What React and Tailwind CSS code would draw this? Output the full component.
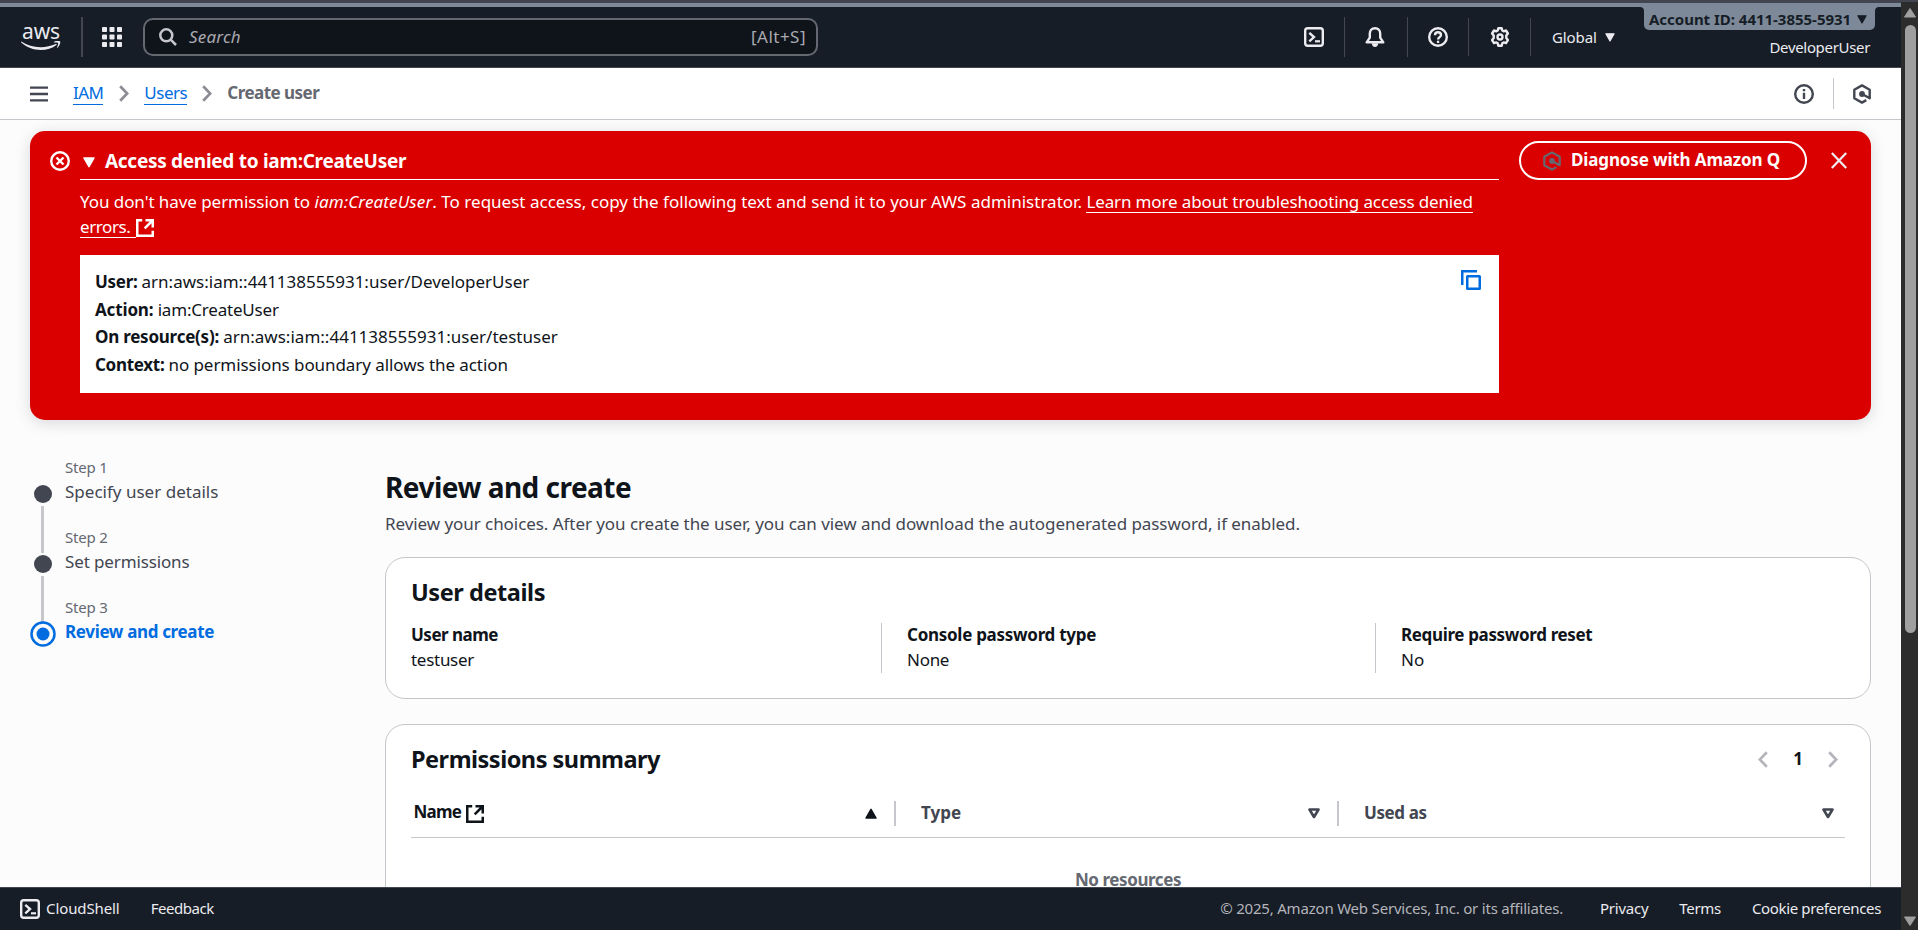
import React from 'react';

const AwsLogo = () => (
  <div className="flex w-10 flex-col items-center text-[#ebebf0]">
    <span className="h-[17px] font-['Noto_Sans',sans-serif] text-[21px] leading-[15px] tracking-[-0.1px]">aws</span>
    <svg width="40" height="10" viewBox="0 0 40 10" fill="currentColor">
      <path d="M.4.6C6 4.200 12.500 6.200 19.500 6.200c5.500 0 10.800-1.200 15.300-3.200.8-.4 1.300.5.600 1C31.300 7.200 25.500 9 19.800 9 12.400 9 5.700 6.300.3 1.500c-.5-.5-.4-1.200.1-.9z" />
      <path d="M33.200.7c2-1.200 5.500-1.200 6 0 .5 1.300-.9 4.700-2.700 6.100-.4.300-.7.100-.5-.3.700-1.600 1.500-3.900 1.100-4.500-.4-.6-2.500-.5-3.800-.4-.5 0-.6-.5-.1-.9z" />
    </svg>
  </div>
);

const GridIcon = () => (
  <svg width="20" height="20" viewBox="0 0 20 20" fill="#ebebf0">
    {[0, 7.5, 15].map((y) => [0, 7.5, 15].map((x) => <rect key={`${x}-${y}`} x={x} y={y} width="5" height="5" rx=".8" />))}
  </svg>
);

const SearchIcon = () => (
  <svg width="18" height="18" viewBox="0 0 18 18" fill="none" stroke="#c6c6cd" strokeWidth="2.500">
    <circle cx="7.300" cy="7.300" r="6" />
    <path d="M11.700 11.700 17 17" />
  </svg>
);

const ShellIcon = () => (
  <svg width="20" height="20" viewBox="0 0 20 20" fill="none" stroke="#ebebf0" strokeWidth="2.400">
    <rect x="1.200" y="1.200" width="17.600" height="17.600" rx="2.500" />
    <path d="m5.300 5.800 4.700 4.300-4.700 4.300" />
    <path d="M11 14.300h5" strokeWidth="2.200" />
  </svg>
);

const BellIcon = () => (
  <svg width="20" height="20" viewBox="0 0 20 20" fill="none" stroke="#ebebf0" strokeWidth="2.400" strokeLinejoin="round">
    <path d="M10 1.200c-3.300 0-5.200 2.300-5.200 5.400v4L1.700 15.300h16.600l-3.100-4.700v-4C15.200 3.500 13.300 1.200 10 1.200z" />
    <path d="M6.800 16.200h6.400c0 2.200-1.400 3.800-3.200 3.800s-3.200-1.600-3.200-3.800z" fill="#ebebf0" stroke="none" />
  </svg>
);

const HelpIcon = () => (
  <svg width="20" height="20" viewBox="0 0 20 20" fill="none" stroke="#ebebf0" strokeWidth="2.400">
    <circle cx="10" cy="10" r="8.800" />
    <path d="M7 8.200C7 6.300 8.300 5.200 10 5.200s3 1.100 3 2.700c0 2.200-2.900 2.200-2.900 4.600" />
    <path d="M8.900 13.700h2.300V16H8.900z" fill="#ebebf0" stroke="none" />
  </svg>
);

const GearIcon = () => (
  <svg width="20" height="20" viewBox="0 0 20 20" fill="none" stroke="#ebebf0" strokeWidth="2.400" strokeLinejoin="round">
    <circle cx="10" cy="10" r="2.500" />
    <path d="M8.300 1.200h3.400l.6 2.300 1.300.8 2.400-.8 1.900 3-1.600 2v2.600l1.600 2-1.900 3-2.400-.7-1.300.8-.6 2.500H8.300l-.6-2.500-1.300-.8-2.400.7-1.900-3 1.600-2V8.500l-1.600-2 1.900-3 2.400.8 1.300-.8z" />
  </svg>
);

const InfoIcon = () => (
  <svg width="20" height="20" viewBox="0 0 20 20" fill="none" stroke="#424650" strokeWidth="2.400">
    <circle cx="10" cy="10" r="8.800" />
    <path d="M10 5v2.200M10 8.800v6.200" />
  </svg>
);

const QIcon = ({ color, strokeWidth }) => (
  <svg width="18" height="20" viewBox="0 0 18 20" fill="none" stroke={color} strokeWidth={strokeWidth} strokeLinejoin="round">
    <path d="M13.300 16.100 9 18.600l-7.700-4.400V5.800L9 1.400l7.700 4.400v8.400L10 10.500" />
    <circle cx="9" cy="10" r="2.900" fill={color} stroke="none" />
  </svg>
);

const ExternalIcon = ({ className }) => (
  <svg className={className} width="18" height="18" viewBox="0 0 18 18" fill="none" stroke="currentColor" strokeWidth="2.500">
    <path d="M6.200 1.250H1.250v15.500h15.500v-5" />
    <path d="M9.500 1.250h7.250v7.250M16.500 1.500 8.700 9.300" />
  </svg>
);

const CopyIcon = () => (
  <svg width="20" height="20" viewBox="0 0 20 20" fill="none" stroke="#006ce0" strokeWidth="2.500">
    <path d="M1.250 15V1.250H16" />
    <rect x="6.250" y="6.250" width="12.500" height="12.500" rx=".3" />
  </svg>
);

const ErrorIcon = () => (
  <svg width="20" height="20" viewBox="0 0 20 20" fill="none" stroke="#ffffff" strokeWidth="2.400">
    <circle cx="10" cy="10" r="8.800" />
    <path d="m6.500 6.500 7 7m0-7-7 7" />
  </svg>
);

const Chevron = ({ color, className }) => (
  <svg className={className} width="10" height="17" viewBox="0 0 10 17" fill="none" stroke={color} strokeWidth="2.700">
    <path d="m1.200 1.200 7 7.300-7 7.300" />
  </svg>
);

const Triangle = ({ className, color }) => (
  <svg className={className} width="12" height="11" viewBox="0 0 12 11" fill={color} stroke={color} strokeWidth="1.500" strokeLinejoin="round">
    <path d="M1 1h10L6 9.700z" />
  </svg>
);

const SortIcon = () => (
  <svg width="12" height="11" viewBox="0 0 12 11" fill="none" stroke="#424650" strokeWidth="2.600" strokeLinejoin="round">
    <path d="M1.500 1.500h9L6 9z" />
  </svg>
);

function Header() {
  return (
    <header className="relative flex h-[61px] shrink-0 items-center border-b border-[#424650] bg-[#161d26] pr-[31px] pl-[21px] text-[15px] text-[#ebebf0]">
      <AwsLogo />
      <div className="ml-5 h-10 w-0.5 bg-[#424650]" />
      <div className="ml-[19px]"><GridIcon /></div>
      <div className="ml-[21px] flex h-[38px] w-[675px] items-center rounded-[10px] border-2 border-[#656871] bg-[#0f141a] pr-2.5 pl-3.5 text-[17px] text-[#a9a9b0]">
        <SearchIcon />
        <span className="ml-3 leading-6 tracking-[0.2px] italic">Search</span>
        <span className="ml-auto leading-6 tracking-[0.48px]">[Alt+S]</span>
      </div>
      <div className="ml-[486px] flex items-center">
        <ShellIcon />
        <div className="ml-5 h-10 w-px bg-[#424650]" />
        <div className="ml-5"><BellIcon /></div>
        <div className="ml-[22px] h-10 w-px bg-[#424650]" />
        <div className="ml-5"><HelpIcon /></div>
        <div className="ml-5 h-[38px] w-px bg-[#424650]" />
        <div className="ml-[21px]"><GearIcon /></div>
        <div className="ml-5 h-[38px] w-px bg-[#424650]" />
        <span className="ml-[21px] tracking-[-0.1px]">Global</span>
        <Triangle className="ml-2 h-[9px] w-[10px]" color="#ebebf0" />
      </div>
      <div className="mt-5 ml-auto leading-5 tracking-[-0.33px]">DeveloperUser</div>
      <div className="absolute top-0 right-[26px] flex h-[23px] w-[231px] items-center rounded-b-[5px] bg-[#7d8998] pb-0.5 pl-[5px] text-[15px] font-bold text-[#161d26]">
        <svg className="absolute top-0 -left-1" width="4" height="4" viewBox="0 0 4 4" fill="#7d8998"><path d="M0 0h4v4C4 1.500 2.500 0 0 0z" /></svg>
        <svg className="absolute top-0 -right-1" width="4" height="4" viewBox="0 0 4 4" fill="#7d8998"><path d="M4 0H0v4C0 1.500 1.500 0 4 0z" /></svg>
        <span className="mt-1 tracking-[-0.02px] whitespace-nowrap">Account ID: 4411-3855-5931</span>
        <Triangle className="mt-1 ml-1.5 h-[9px] w-[10px]" color="#161d26" />
      </div>
    </header>
  );
}

function Breadcrumbs() {
  return (
    <nav className="flex h-[52px] shrink-0 items-center border-b border-[#c6c6cd] bg-white pr-[30px] pl-[30px] text-[17px]">
      <svg width="18" height="16" viewBox="0 0 18 16" stroke="#424650" strokeWidth="2.400"><path d="M0 1.600h18M0 8h18M0 14.400h18" /></svg>
      <a className="ml-[25px] h-[22px] border-b border-[#006ce0] leading-5 tracking-[-0.6px] text-[#006ce0]">IAM</a>
      <Chevron className="ml-4" color="#8c8c94" />
      <a className="ml-[15px] h-[22px] border-b border-[#006ce0] leading-5 tracking-[-0.46px] text-[#006ce0]">Users</a>
      <Chevron className="ml-[15px]" color="#8c8c94" />
      <span className="ml-[15px] h-[22px] leading-5 font-bold tracking-[-0.53px] text-[#656871]">Create user</span>
      <div className="ml-auto flex items-center">
        <InfoIcon />
        <div className="mr-[19px] ml-[19px] h-[31px] w-px bg-[#c6c6cd]" />
        <QIcon color="#424650" strokeWidth="2.400" />
      </div>
    </nav>
  );
}

function Alert() {
  return (
    <section className="mx-[30px] mt-[11px] flex h-[289px] shrink-0 rounded-[15px] bg-[#db0000] pl-5 text-[17px] text-white shadow-[0_3px_16px_rgba(0,7,22,0.14)]">
      <div className="pt-5"><ErrorIcon /></div>
      <div className="ml-2.5 w-[1419px]">
        <div className="flex h-[49px] items-center border-b border-white pt-3 pl-[3px]">
          <Triangle color="#ffffff" className="mt-0.5" />
          <h3 className="ml-[10px] text-[19px] font-bold tracking-[-0.29px]">Access denied to iam:CreateUser</h3>
        </div>
        <div className="mt-[9px] whitespace-nowrap">
          <div className="flex h-[25px] leading-[25px] whitespace-pre">
            <span className="tracking-[-0.06px]">You don't have permission to </span>
            <span className="tracking-[0.13px] italic">iam:CreateUser</span>
            <span className="tracking-[0.01px]">. To request access, copy the following text and send it to your AWS administrator. </span>
            <a className="h-6 border-b border-white tracking-[-0.13px]">Learn more about troubleshooting access denied</a>
          </div>
          <div className="flex h-[25px] leading-[25px]">
            <a className="h-6 border-b border-white pr-[5px] tracking-[-0.4px]">errors.</a>
            <ExternalIcon className="mt-[5px]" />
          </div>
        </div>
        <div className="mt-4 flex h-[138px] justify-between bg-white pt-[13px] pr-[18px] pl-[15px] text-[#0f141a]">
          <div className="text-[17px] leading-[27.5px] whitespace-pre">
            <div><b className="tracking-[-0.3px]">User: </b><span>arn:aws:iam::441138555931:user/DeveloperUser</span></div>
            <div><b className="tracking-[-0.15px]">Action: </b><span className="tracking-[-0.2px]">iam:CreateUser</span></div>
            <div><b className="tracking-[-0.24px]">On resource(s): </b><span className="tracking-[0.01px]">arn:aws:iam::441138555931:user/testuser</span></div>
            <div><b className="tracking-[-0.3px]">Context: </b><span className="tracking-[-0.07px]">no permissions boundary allows the action</span></div>
          </div>
          <div className="pt-0.5"><CopyIcon /></div>
        </div>
      </div>
      <div className="mt-2.5 ml-5 flex h-[39px] w-72 items-center rounded-full border-2 border-white pl-[22px]">
        <QIcon color="#656871" strokeWidth="2.200" />
        <span className="-mt-px ml-2.5 text-[17px] font-bold tracking-[-0.14px] whitespace-nowrap">Diagnose with Amazon Q</span>
      </div>
      <svg className="mt-[21px] ml-6" width="16" height="17" viewBox="0 0 16 17" fill="none" stroke="#ebebf0" strokeWidth="2.300"><path d="m.8 1 14.400 15M15.200 1 .8 16" /></svg>
    </section>
  );
}

function Step({ label, title, last, titleClass }) {
  return (
    <li className="flex h-[70px]">
      <div className="flex w-[26px] flex-col items-center">
        {last ? (
          <svg className="mt-[26px]" width="26" height="26" viewBox="0 0 26 26"><circle cx="13" cy="13" r="11.500" fill="none" stroke="#006ce0" strokeWidth="2.500" /><circle cx="13" cy="13" r="6.500" fill="#006ce0" /></svg>
        ) : (
          <>
            <span className="mt-[30px] size-[18px] shrink-0 rounded-full bg-[#424650]" />
            <span className="mt-[3px] -mb-[28px] h-[47px] w-[3px] shrink-0 bg-[#c6c6cd]" />
          </>
        )}
      </div>
      <div className="ml-[9.5px]">
        <div className="h-6 text-[15px] leading-[25px] tracking-[-0.2px] text-[#656871]">{label}</div>
        <div className={titleClass}>{title}</div>
      </div>
    </li>
  );
}

function Steps() {
  return (
    <ol className="mt-[35px] ml-[29.5px] w-[355.5px] shrink-0">
      <Step label="Step 1" title="Specify user details" titleClass="text-[17px] leading-[25px] text-[#424650] tracking-[0.01px]" />
      <Step label="Step 2" title="Set permissions" titleClass="text-[17px] leading-[25px] text-[#424650] tracking-[-0.13px]" />
      <Step label="Step 3" title="Review and create" last titleClass="text-[17px] leading-[25px] font-bold text-[#006ce0] tracking-[-0.34px]" />
    </ol>
  );
}

function UserDetails() {
  return (
    <section className="mt-[21px] h-[142px] rounded-[20px] border border-[#c6c6cd] bg-white px-[25px] pt-[19px]">
      <h2 className="text-[23.5px] leading-[30px] font-bold tracking-[-0.43px]">User details</h2>
      <dl className="mt-[16px] flex h-[50px] text-[17px] leading-[25px]">
        <div className="w-[470px]"><dt className="-mt-px font-bold tracking-[-0.5px]">User name</dt><dd className="tracking-[-0.28px]">testuser</dd></div>
        <div className="w-[494px] border-l border-[#c6c6cd] pl-[25px]"><dt className="-mt-px font-bold tracking-[-0.28px]">Console password type</dt><dd className="tracking-[-0.28px]">None</dd></div>
        <div className="border-l border-[#c6c6cd] pl-[25px]"><dt className="-mt-px font-bold tracking-[-0.35px]">Require password reset</dt><dd>No</dd></div>
      </dl>
    </section>
  );
}

function PermissionsSummary() {
  return (
    <section className="mt-[25px] h-[240px] rounded-[20px] border border-[#c6c6cd] bg-white px-[25px] pt-[19px]">
      <div className="flex items-center">
        <h2 className="text-[23.5px] leading-[30px] font-bold tracking-[-0.5px]">Permissions summary</h2>
        <div className="mr-[7px] ml-auto flex items-center text-[17px] font-bold">
          <Chevron className="rotate-180" color="#b4b4bb" />
          <span className="mx-[25px] w-[10px] text-center leading-6">1</span>
          <Chevron color="#b4b4bb" />
        </div>
      </div>
      <div className="mt-[17px] flex h-[47px] items-center border-b border-[#c6c6cd] pb-px text-[17px] font-bold text-[#424650]">
        <div className="flex w-[483px] items-center pr-[17px] pl-[2.5px] text-[#0f141a]">
          <span className="-mt-1 tracking-[-0.75px]">Name</span>
          <ExternalIcon className="ml-[5px]" />
          <Triangle className="ml-auto rotate-180" color="#0f141a" />
        </div>
        <div className="h-[25px] w-0.5 bg-[#c6c6cd]" />
        <div className="flex w-[441px] items-center justify-between pr-[17px] pl-[25px]"><span className="-mt-px">Type</span><SortIcon /></div>
        <div className="h-[25px] w-0.5 bg-[#c6c6cd]" />
        <div className="flex flex-1 items-center justify-between pr-[11px] pl-[25px]"><span className="-mt-px tracking-[-0.4px]">Used as</span><SortIcon /></div>
      </div>
      <div className="mt-[30px] text-center text-[17px] leading-6 font-bold tracking-[-0.43px] text-[#656871]">No resources</div>
    </section>
  );
}

function Footer() {
  return (
    <footer className="flex h-[43px] shrink-0 items-center border-t border-[#424650] bg-[#161d26] pr-5 pl-5 text-[15px] leading-5 text-[#ebebf0]">
      <ShellIcon />
      <div className="-mt-0.5 flex flex-1">
        <span className="ml-1.5 tracking-[-0.1px]">CloudShell</span>
        <span className="ml-[31px] tracking-[-0.45px]">Feedback</span>
        <span className="ml-auto tracking-[-0.2px] text-[#b4b4bb]">© 2025, Amazon Web Services, Inc. or its affiliates.</span>
        <span className="ml-[37px] tracking-[-0.25px]">Privacy</span>
        <span className="ml-[31px] tracking-[-0.3px]">Terms</span>
        <span className="ml-[31px] tracking-[-0.36px]">Cookie preferences</span>
      </div>
    </footer>
  );
}

function Scrollbar() {
  return (
    <div className="-mt-px flex w-[17px] shrink-0 flex-col items-center bg-[#2c2c2c] pt-1.5 pb-1 pl-px">
      <svg width="12" height="10" viewBox="0 0 12 10" fill="#9f9f9f"><path d="M6 .5 11.500 9H.5z" stroke="#9f9f9f" strokeLinejoin="round" /></svg>
      <div className="mt-[7px] h-[608px] w-[11px] rounded-full bg-[#9f9f9f]" />
      <svg className="mt-auto" width="12" height="10" viewBox="0 0 12 10" fill="#9f9f9f"><path d="M6 9.500 11.500 1H.5z" stroke="#9f9f9f" strokeLinejoin="round" /></svg>
    </div>
  );
}

export default function App() {
  return (
    <div className="flex h-[930px] w-[1918px] flex-col overflow-hidden bg-[#424450] font-['Noto_Sans','Open_Sans',sans-serif] text-[#0f141a]">
      <div className="h-[3px] shrink-0 bg-[#424450]" />
      <div className="flex min-h-0 flex-1">
        <div className="flex w-[1901px] flex-col">
          <div className="h-1 shrink-0 bg-[#7d8998]" />
          <Header />
          <Breadcrumbs />
          <main className="flex min-h-0 flex-1 flex-col overflow-hidden bg-[#fcfcfd]">
            <Alert />
            <div className="flex">
              <Steps />
              <div className="w-[1486px] pt-[48px]">
                <h1 className="text-[28px] leading-[38px] font-bold tracking-[-0.52px]">Review and create</h1>
                <p className="mt-[5px] text-[17px] leading-[25px] tracking-[-0.06px] text-[#424650]">
                  Review your choices. After you create the user, you can view and download the autogenerated password, if enabled.
                </p>
                <UserDetails />
                <PermissionsSummary />
              </div>
            </div>
          </main>
          <Footer />
        </div>
        <Scrollbar />
      </div>
    </div>
  );
}
